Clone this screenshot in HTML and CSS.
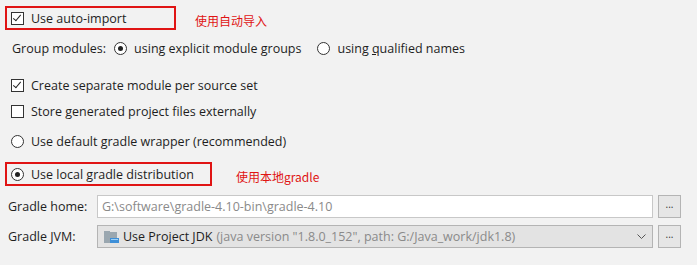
FILE: index.html
```html
<!DOCTYPE html>
<html lang="zh">
<head>
    <meta charset="UTF-8">
    <title>Gradle Settings</title>
    <link rel="stylesheet" href="styles.css">
</head>
<body>
    <div class="panel">
        <div class="row row-first">
            <div class="mark mark-auto">
                <span class="check checked"></span>
                <span>Use auto-import</span>
            </div>
            <span class="note note-auto">使用自动导入</span>
        </div>

        <div class="row row-group">
            <span class="label">Group modules:</span>
            <span class="radio selected"></span>
            <span class="opt">using explicit module groups</span>
            <span class="radio radio-second"></span>
            <span class="opt">using <u>q</u>ualified names</span>
        </div>

        <div class="row row-create">
            <span class="check checked"></span>
            <span>Create separate module per source set</span>
        </div>

        <div class="row row-store">
            <span class="check"></span>
            <span>Store generated project files externally</span>
        </div>

        <div class="row row-wrapper">
            <span class="radio"></span>
            <span>Use default gradle wrapper (recommended)</span>
        </div>

        <div class="row row-local">
            <div class="mark mark-local">
                <span class="radio selected"></span>
                <span>Use local gradle distribution</span>
            </div>
            <span class="note note-local">使用本地gradle</span>
        </div>

        <div class="field-row field-home">
            <span class="field-label">Gradle home:</span>
            <div class="input">G:\software\gradle-4.10-bin\gradle-4.10</div>
            <div class="dots">...</div>
        </div>

        <div class="field-row field-jvm">
            <span class="field-label">Gradle JVM:</span>
            <div class="input combo">
                <svg class="jdk-icon" width="16" height="16" viewBox="0 0 16 16">
                    <rect x="1" y="3" width="13" height="11" fill="#9aa7b0"/>
                    <rect x="1" y="2" width="6" height="2" fill="#9aa7b0"/>
                    <rect x="7" y="9" width="9" height="5" fill="#3d8fd8"/>
                    <rect x="8" y="10" width="7" height="1" fill="#9fd0f5"/>
                </svg>
                <span class="combo-main">Use Project JDK</span>
                <span class="combo-sub">(java version "1.8.0_152", path: G:/Java_work/jdk1.8)</span>
                <svg class="chevron" width="9" height="6" viewBox="0 0 9 6">
                    <polyline points="0.5,0.5 4.5,4.5 8.5,0.5" fill="none" stroke="#555" stroke-width="1"/>
                </svg>
            </div>
            <div class="dots">...</div>
        </div>
    </div>
</body>
</html>
```

FILE: styles.css
```css
body {
    margin: 0;
    background: #f2f2f2;
    font-family: "Open Sans", "Noto Sans", sans-serif;
    font-size: 12.5px;
    color: #1e1e1e;
}
.panel {
    width: 697px;
    height: 265px;
    overflow: hidden;
}
.row {
    display: flex;
    align-items: center;
    height: 20px;
    padding-left: 11px;
}
.row-first {
    padding-left: 5px;
    margin-top: 6px;
    height: 24px;
}
.mark {
    display: flex;
    align-items: center;
    box-sizing: border-box;
    height: 24px;
    border: 2px solid #e01414;
    padding-left: 4px;
}
.mark-auto {
    width: 171px;
}
.mark-local {
    width: 207px;
}
.note {
    color: #e01414;
    font-family: "Noto Sans CJK SC", sans-serif;
    font-size: 12px;
    margin-top: 5px;
}
.note-auto {
    margin-left: 19px;
}
.note-local {
    margin-left: 24px;
}
.check {
    width: 11px;
    height: 11px;
    border: 1px solid #333;
    background: #fff;
    margin-right: 7px;
    position: relative;
    flex: none;
}
.check.checked::after {
    content: "";
    position: absolute;
    left: 3px;
    top: 0px;
    width: 3px;
    height: 7px;
    border-right: 1px solid #222;
    border-bottom: 1px solid #222;
    transform: rotate(40deg);
}
.radio {
    width: 11px;
    height: 11px;
    border: 1px solid #333;
    border-radius: 50%;
    background: #fff;
    margin-right: 7px;
    position: relative;
    flex: none;
}
.radio.selected::after {
    content: "";
    position: absolute;
    left: 3px;
    top: 3px;
    width: 5px;
    height: 5px;
    border-radius: 50%;
    background: #222;
}
.row-group {
    margin-top: 8px;
    padding-left: 12px;
}
.row-group .label {
    margin-right: 8px;
}
.row-group .radio-second {
    margin-left: 16px;
}
.row-create {
    margin-top: 17px;
}
.row-store {
    margin-top: 6px;
}
.row-wrapper {
    margin-top: 10px;
}
.row-local {
    padding-left: 5px;
    margin-top: 11px;
    height: 24px;
}
.field-row {
    display: flex;
    align-items: center;
    padding-left: 8px;
    height: 23px;
}
.field-home {
    margin-top: 9px;
}
.field-jvm {
    margin-top: 7px;
}
.field-label {
    width: 89px;
}
.input {
    box-sizing: border-box;
    width: 556px;
    height: 23px;
    border: 1px solid #c8c8c8;
    background: #fff;
    color: #8a8a8a;
    display: flex;
    align-items: center;
    padding-left: 4px;
}
.combo {
    background: #e3e3e3;
    border-color: #b4b4b4;
    padding-left: 5px;
}
.jdk-icon {
    margin-right: 4px;
}
.combo-main {
    color: #1e1e1e;
    margin-right: 4px;
}
.combo-sub {
    color: #8a8a8a;
    flex: 1;
}
.chevron {
    margin-right: 6px;
}
.dots {
    box-sizing: border-box;
    width: 23px;
    height: 23px;
    margin-left: 5px;
    border: 1px solid #b4b4b4;
    background: #e6e6e6;
    color: #333;
    font-size: 10px;
    text-align: center;
    line-height: 17px;
}
```
